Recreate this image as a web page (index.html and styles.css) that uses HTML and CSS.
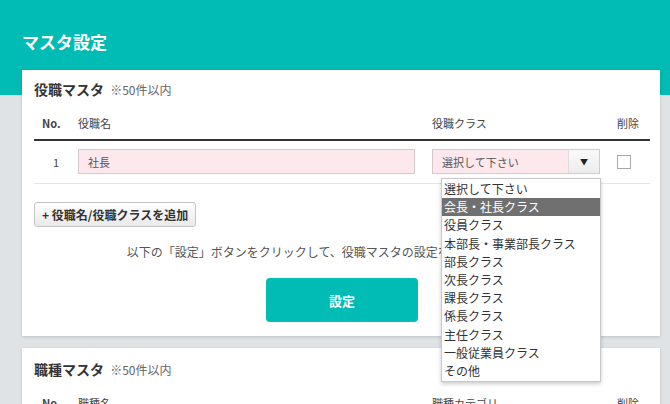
FILE: index.html
```html
<!DOCTYPE html>
<html lang="ja">
  <head>
    <meta charset="UTF-8" />
    <title>マスタ設定</title>
    <link rel="stylesheet" href="styles.css">
  </head>
  <body>
    <div class="header">
      <h1>マスタ設定</h1>
    </div>

    <div class="main">
      <!-- 役職マスタ -->
      <div class="card">
        <h2>役職マスタ <span class="note">※50件以内</span></h2>
        <div class="table">
          <div class="row head">
            <div class="col-no">No.</div>
            <div>役職名</div>
            <div>役職クラス</div>
            <div>削除</div>
          </div>
          <div class="row">
            <div class="col-no num">1</div>
            <div><input type="text" class="text-input" value="社長" /></div>
            <div class="select-wrap">
              <div class="select">
                <span class="select-label">選択して下さい</span>
                <span class="select-arrow">▼</span>
              </div>
              <ul class="dropdown">
                <li>選択して下さい</li>
                <li class="selected">会長・社長クラス</li>
                <li>役員クラス</li>
                <li>本部長・事業部長クラス</li>
                <li>部長クラス</li>
                <li>次長クラス</li>
                <li>課長クラス</li>
                <li>係長クラス</li>
                <li>主任クラス</li>
                <li>一般従業員クラス</li>
                <li>その他</li>
              </ul>
            </div>
            <div><span class="checkbox"></span></div>
          </div>
        </div>
        <button class="add-btn">+ 役職名/役職クラスを追加</button>
        <p class="info">以下の「設定」ボタンをクリックして、役職マスタの設定を保存してください。</p>
        <button class="submit-btn">設定</button>
      </div>

      <!-- 職種マスタ -->
      <div class="card">
        <h2>職種マスタ <span class="note">※50件以内</span></h2>
        <div class="table">
          <div class="row head">
            <div class="col-no">No.</div>
            <div>職種名</div>
            <div>職種カテゴリ</div>
            <div>削除</div>
          </div>
        </div>
      </div>
    </div>
  </body>
</html>
```

FILE: styles.css
```css
body {
  margin: 0;
  background: #e0e3e5;
  font-family: "Noto Sans CJK JP", "Noto Sans", sans-serif;
  color: #333;
  overflow: hidden;
}
.header {
  background: #00bcb4;
  height: 95px;
  padding: 30px 22px 0;
  box-sizing: border-box;
}
.header h1 {
  margin: 0;
  color: #fff;
  font-size: 17px;
  line-height: 24px;
  font-weight: bold;
}
.main {
  margin-top: -25px;
  padding: 0 10px 0 22px;
}
.card {
  background: #fff;
  padding: 9px 10px 14px 12px;
  margin-bottom: 12px;
  box-shadow: 0 1px 3px rgba(0, 0, 0, 0.15);
  display: flex;
  flex-direction: column;
}
.card:last-child {
  padding-top: 11px;
}
h2 {
  margin: 0;
  font-size: 14px;
  line-height: 20px;
  font-weight: bold;
  color: #333;
}
.note {
  font-size: 12px;
  font-weight: normal;
  color: #666;
  margin-left: 3px;
}
.row {
  display: grid;
  grid-template-columns: 44px 354px 185px 1fr;
  align-items: center;
  font-size: 11px;
}
.row.head {
  padding: 14px 0 7px;
  line-height: 18px;
  border-bottom: 2px solid #333;
  color: #444;
}
.row.head .col-no {
  padding-left: 8px;
  font-weight: bold;
}
.row:not(.head) {
  padding: 8px 0 9px;
  border-bottom: 1px solid #e6e6e6;
}
.num {
  text-align: center;
  color: #444;
}
.text-input {
  width: 337px;
  height: 25px;
  box-sizing: border-box;
  border: 1px solid #d6c9cd;
  background: #fde8ee;
  padding: 0 9px;
  font-family: inherit;
  font-size: 11px;
  color: #555;
  margin: 0;
  display: block;
}
.select-wrap {
  position: relative;
}
.select {
  width: 168px;
  height: 25px;
  box-sizing: border-box;
  border: 1px solid #d6c9cd;
  background: #fde8ee;
  display: flex;
  align-items: center;
}
.select-label {
  flex: 1;
  padding-left: 9px;
  font-size: 11px;
  color: #555;
}
.select-arrow {
  width: 30px;
  height: 100%;
  border-left: 1px solid #ddd;
  background: linear-gradient(#fafafa, #ececec);
  font-size: 8px;
  color: #222;
  display: flex;
  align-items: center;
  justify-content: center;
}
.checkbox {
  display: block;
  width: 14px;
  height: 14px;
  border: 1px solid #aaa;
  box-sizing: border-box;
  background: #fff;
}
.dropdown {
  position: absolute;
  left: 9px;
  top: 29px;
  width: 158px;
  margin: 0;
  padding: 1px 0;
  list-style: none;
  background: #fff;
  border: 1px solid #c8c8c8;
  box-shadow: 0 2px 4px rgba(0, 0, 0, 0.2);
  z-index: 10;
}
.dropdown li {
  height: 18.2px;
  line-height: 18px;
  padding-left: 2px;
  font-size: 12px;
  color: #333;
  white-space: nowrap;
}
.dropdown li.selected {
  background: #707070;
  color: #fff;
}
.add-btn {
  align-self: flex-start;
  margin-top: 18px;
  height: 25px;
  padding: 0 7px;
  border: 1px solid #c4c4c4;
  border-radius: 3px;
  background: linear-gradient(#ffffff, #e9e9e9);
  font-family: inherit;
  font-size: 12px;
  font-weight: bold;
  color: #333;
}
.info {
  margin: 16px 0 0;
  text-align: center;
  font-size: 12px;
  line-height: 18px;
  color: #555;
}
.submit-btn {
  align-self: center;
  margin-top: 17px;
  width: 152px;
  height: 44px;
  border: none;
  border-radius: 4px;
  background: #00bcb4;
  color: #fff;
  font-family: inherit;
  font-size: 13px;
  font-weight: bold;
}
```
